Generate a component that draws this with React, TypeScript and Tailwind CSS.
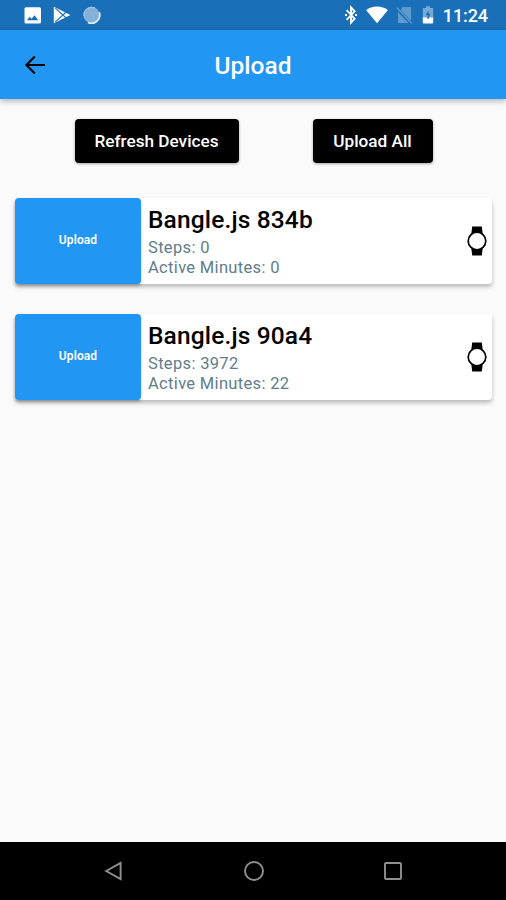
const devices = [
  { name: "Bangle.js 834b", steps: 0, minutes: 0 },
  { name: "Bangle.js 90a4", steps: 3972, minutes: 22 },
];

function StatusBar() {
  return (
    <div className="flex h-[30px] shrink-0 items-center bg-[#1a70b8] pr-[18px] pl-6 text-white">
      <svg width="17" height="17" viewBox="0 0 17 17" className="mr-3">
        <rect x="0.5" y="0.2" width="16.5" height="16.3" rx="1.5" fill="#fff" />
        <path d="M3 13.2l2.6-3.4 2 2 3-3.6 3.6 5z" fill="#1a70b8" />
      </svg>
      <svg width="18" height="18" viewBox="0 0 18 18" className="mr-3">
        <path d="M0.8 0.8L17.4 9 0.8 17.2z" fill="#fff" />
        <path d="M2.3 2.2L13.2 12M2.3 15.8L13.2 6" stroke="#1a70b8" strokeWidth="1.1" />
      </svg>
      <svg width="18" height="18" viewBox="0 0 18 18">
        <circle cx="8.5" cy="9" r="8.2" fill="#83b1d9" />
        <path d="M16.3 6.3A8.2 8.2 0 0 1 5 16.4" fill="none" stroke="#e3eef7" strokeWidth="1.7" />
        <path d="M1 10A7.7 7.7 0 0 1 12 2" fill="none" stroke="#a9cae6" strokeWidth="1" />
      </svg>
      <div className="ml-auto flex items-center">
        <svg width="14" height="20" viewBox="0 0 14 20" className="mr-2" fill="none" stroke="#fff">
          <path d="M2.6 5.2l8 8.5L7 17.6V2.4l3.6 3.9-8 8.5" strokeWidth="1.9" />
          <path d="M1 10h2M11 10h2" strokeWidth="2" />
        </svg>
        <svg width="22" height="18" viewBox="0 0 22 18" className="mr-2">
          <path d="M11 17.3L0.2 4.2C3 1.8 6.8 0.6 11 0.6s8 1.2 10.8 3.6z" fill="#fff" />
        </svg>
        <svg width="17" height="18" viewBox="0 0 17 18" className="mr-[9px]">
          <path d="M6.5 1H15v13.8L4.8 4zM2 6l10.5 11H2z" fill="#5f9bce" />
          <path d="M1 1.8l14.8 15.4" stroke="#5f9bce" strokeWidth="1.3" />
        </svg>
        <svg width="12" height="18" viewBox="0 0 12 18" className="mr-[9px]">
          <path d="M4 0.3h4v1.6h3.2V12H0.8V1.9H4z" fill="#76a9d5" />
          <path d="M6.6 4.2L3.6 9.2h2V12h1.2l1.6-4.2H6.6z" fill="#1a70b8" />
          <path d="M0.8 11.6h3.8L6 13.2l1.4-1.6h3.8v4.8q0 1-1 1H1.8q-1 0-1-1z" fill="#fff" />
        </svg>
        <span className="pt-0.5 text-[18px] leading-none font-medium tracking-[-0.1px]">11:24</span>
      </div>
    </div>
  );
}

function AppBar() {
  return (
    <header className="z-10 grid h-[69px] shrink-0 grid-cols-[1fr_auto_1fr] items-center bg-[#2196f3] shadow-[0_2px_6px_rgba(0,0,0,0.3)]">
      <svg width="28" height="28" viewBox="0 0 24 24" className="ml-5">
        <path
          d="M21.4 12H5.9M12.7 4.8L5.5 12l7.2 7.2"
          fill="none"
          stroke="#000"
          strokeWidth="1.8"
        />
      </svg>
      <h1 className="pt-1 text-[24.5px] font-medium text-white">Upload</h1>
    </header>
  );
}

function WatchIcon() {
  return (
    <svg width="22" height="30" viewBox="0 0 22 30" className="mr-1 shrink-0">
      <path d="M6.2 0.4h9.6l1 8H5.2zM5.2 21.6h11.6l-1 8H6.2z" />
      <circle cx="11" cy="15" r="8.8" fill="#fff" stroke="#000" strokeWidth="1.7" />
    </svg>
  );
}

function DeviceCard({ name, steps, minutes }: (typeof devices)[number]) {
  return (
    <div className="flex h-[86px] items-center rounded-[4px] bg-white shadow-[0_3px_4px_rgba(0,0,0,0.25)]">
      <button className="h-full w-[126px] shrink-0 rounded-[4px] bg-[#2196f3] pb-0.5 text-[12px] font-semibold tracking-[0.1px] text-white shadow-[0_2px_3px_rgba(0,0,0,0.25)]">
        Upload
      </button>
      <div className="ml-[7px] flex-1 text-[#607d8b]">
        <h2 className="text-[24.5px] leading-[30px] font-medium tracking-[0.15px] text-black">{name}</h2>
        <p className="mt-[3px] text-[16.5px] leading-5 tracking-[0.33px]">Steps: {steps}</p>
        <p className="text-[16.5px] leading-5 tracking-[0.33px]">Active Minutes: {minutes}</p>
      </div>
      <WatchIcon />
    </div>
  );
}

function NavBar() {
  return (
    <nav className="flex h-[58px] shrink-0 items-center justify-between bg-black pr-[103px] pl-[104px]">
      <svg width="20" height="22" viewBox="0 0 20 22" fill="none" stroke="#909090" strokeWidth="1.9">
        <path d="M2.2 11L16.6 2.8v16.4z" />
      </svg>
      <svg width="22" height="22" viewBox="0 0 22 22" fill="none" stroke="#909090" strokeWidth="1.9">
        <circle cx="11" cy="11" r="9" />
      </svg>
      <svg width="20" height="20" viewBox="0 0 20 20" fill="none" stroke="#909090" strokeWidth="1.9">
        <rect x="2" y="2" width="16" height="16" rx="1" />
      </svg>
    </nav>
  );
}

export default function App() {
  return (
    <div className="flex h-screen flex-col bg-[#fafafa] font-['Roboto',sans-serif]">
      <StatusBar />
      <AppBar />
      <main className="flex-1 px-[15px] pt-5">
        <div className="flex gap-[74px] pl-[60px]">
          <button className="h-11 w-[164px] rounded-[4px] bg-black pt-0.5 pr-px text-[17.2px] font-medium text-white shadow-[0_1px_3px_rgba(0,0,0,0.35)]">
            Refresh Devices
          </button>
          <button className="h-11 w-[120px] rounded-[4px] bg-black pt-0.5 pr-px text-[17.2px] font-medium text-white shadow-[0_1px_3px_rgba(0,0,0,0.35)]">
            Upload All
          </button>
        </div>
        <div className="mt-[35px] mr-[-1px] space-y-[30px]">
          {devices.map((device) => (
            <DeviceCard key={device.name} {...device} />
          ))}
        </div>
      </main>
      <NavBar />
    </div>
  );
}
